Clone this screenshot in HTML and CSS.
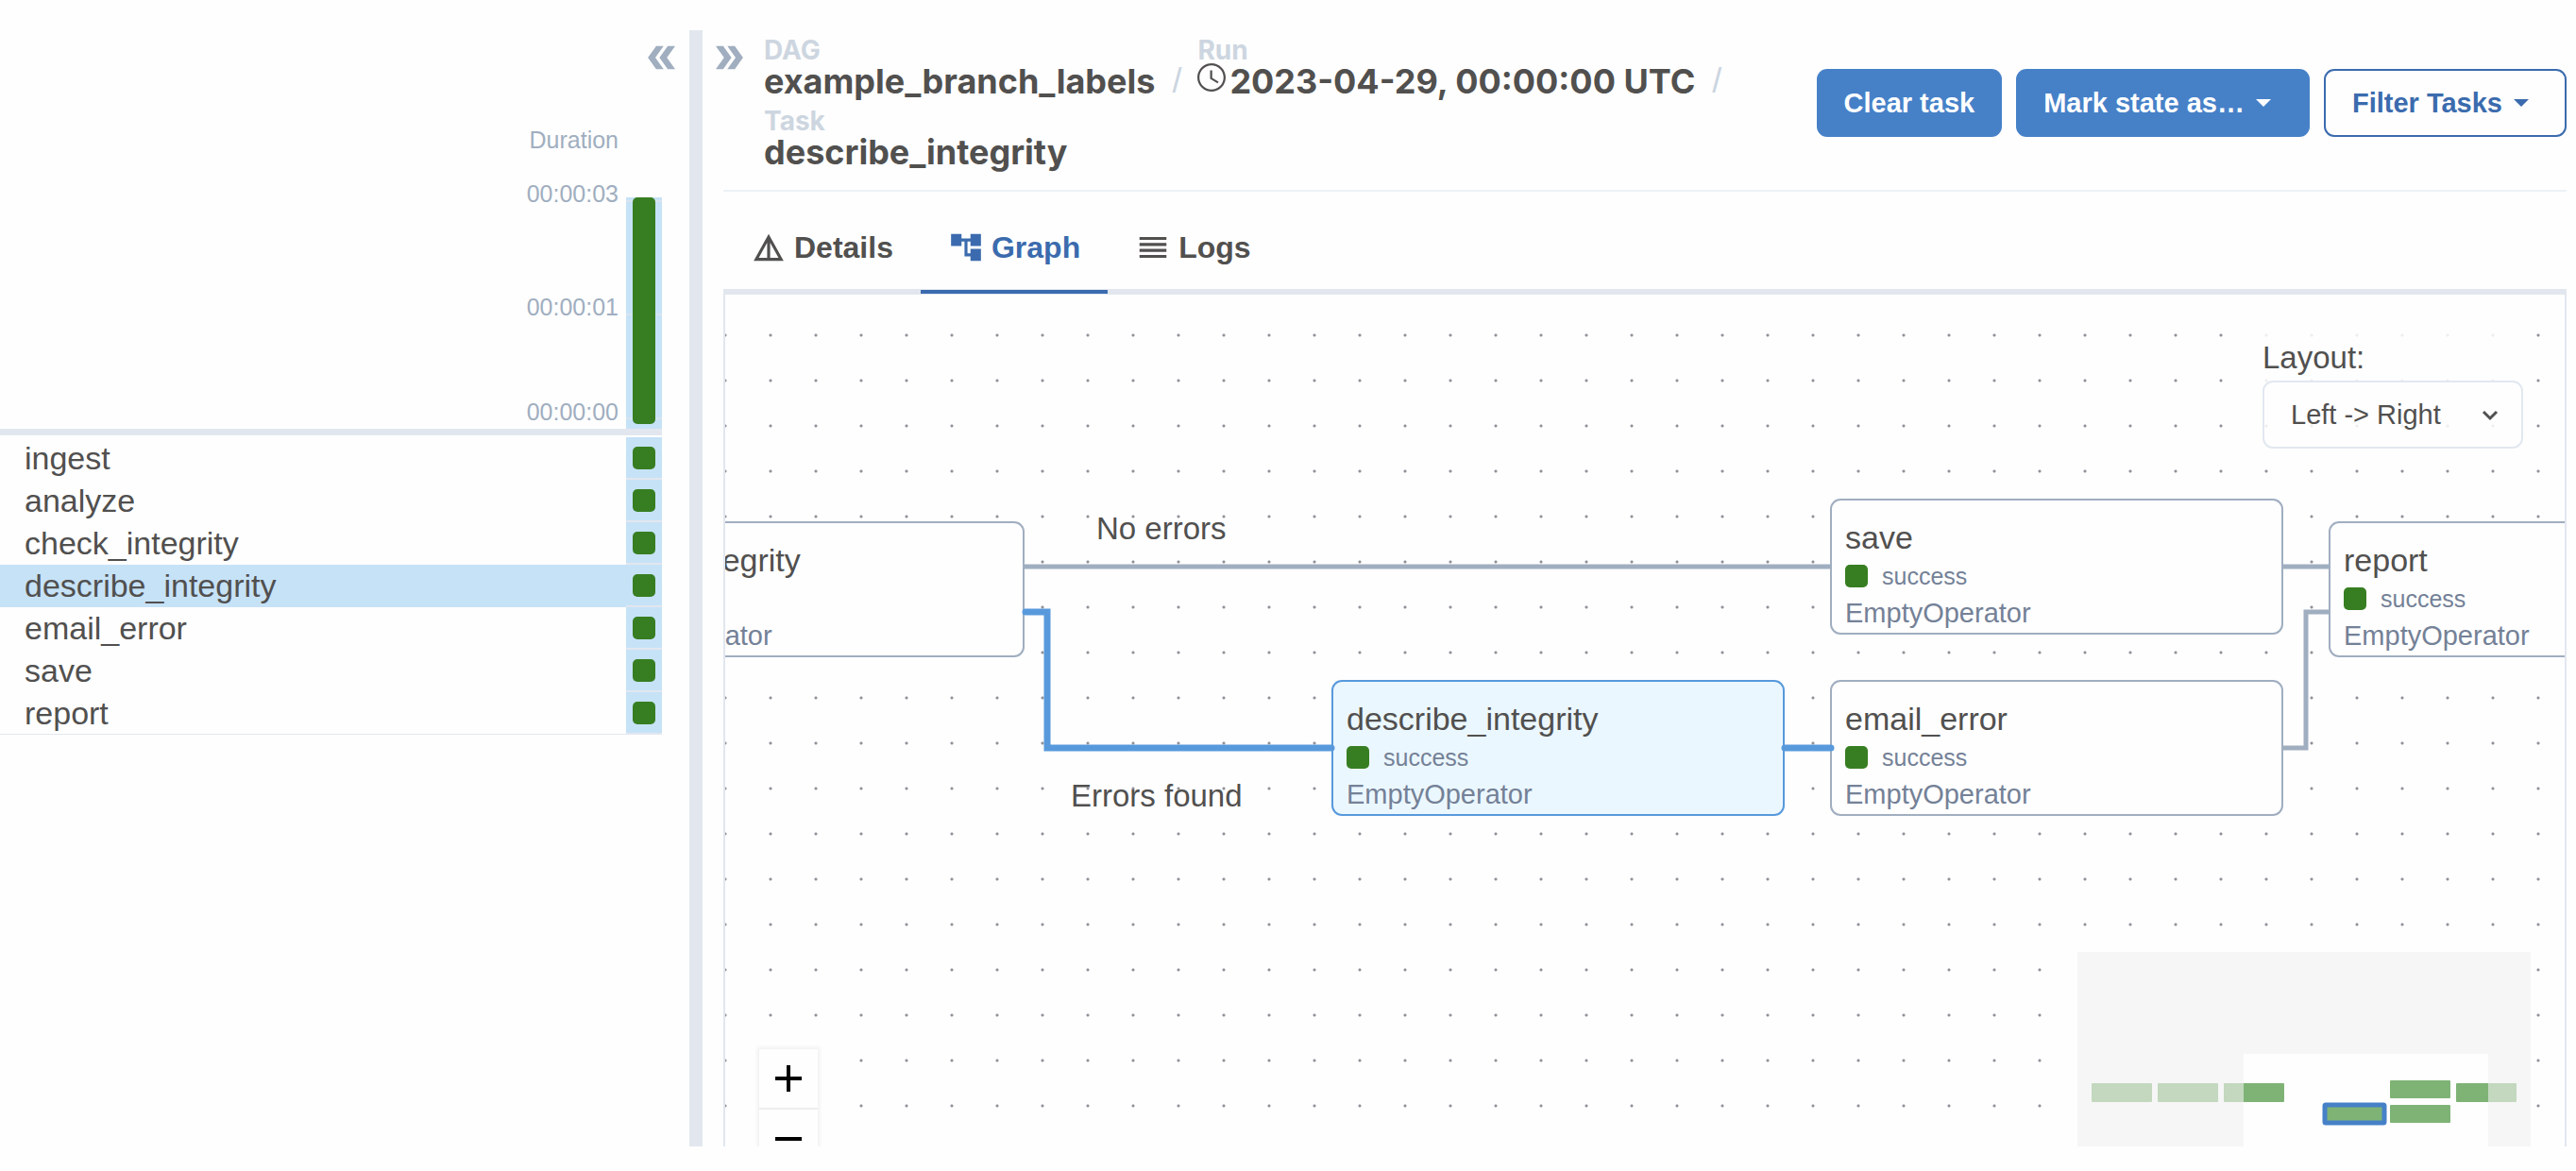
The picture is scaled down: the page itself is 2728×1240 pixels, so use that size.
FILE: index.html
```html
<!DOCTYPE html>
<html lang="en">
<head>
<meta charset="utf-8">
<title>example_branch_labels - Graph</title>
<link rel="stylesheet" href="styles.css">
</head>
<body>
<aside class="grid-panel">
  <button class="toggle toggle-left" aria-label="Collapse grid">
    <svg viewBox="0 0 24 24"><path d="M15.5 5H11l5 7-5 7h4.5l5-7z"/><path d="M8.5 5H4l5 7-5 7h4.5l5-7z"/></svg>
  </button>
  <table class="grid">
    <thead>
      <tr>
        <th class="axis" scope="col">
          <div class="axis-title">Duration</div>
          <div class="tick tick-max">00:00:03</div>
          <div class="tick tick-mid">00:00:01</div>
          <div class="tick">00:00:00</div>
        </th>
        <th class="run" scope="col"><div class="run-col"><div class="run-bar"></div></div></th>
      </tr>
    </thead>
    <tbody>
      <tr><th scope="row">ingest</th><td><span class="state"></span></td></tr>
      <tr><th scope="row">analyze</th><td><span class="state"></span></td></tr>
      <tr><th scope="row">check_integrity</th><td><span class="state"></span></td></tr>
      <tr class="selected"><th scope="row">describe_integrity</th><td><span class="state"></span></td></tr>
      <tr><th scope="row">email_error</th><td><span class="state"></span></td></tr>
      <tr><th scope="row">save</th><td><span class="state"></span></td></tr>
      <tr><th scope="row">report</th><td><span class="state"></span></td></tr>
    </tbody>
  </table>
</aside>
<div class="divider"></div>
<main class="details-panel">
  <header class="header">
    <button class="toggle" aria-label="Expand details">
      <svg viewBox="0 0 24 24"><path d="M15.5 5H11l5 7-5 7h4.5l5-7z"/><path d="M8.5 5H4l5 7-5 7h4.5l5-7z"/></svg>
    </button>
    <nav class="crumbs" aria-label="Breadcrumb">
      <div class="crumb">
        <a href="#dag"><span class="crumb-label">DAG</span><span class="crumb-value">example_branch_labels</span></a>
        <span class="slash">/</span>
      </div>
      <div class="crumb">
        <a href="#run"><span class="crumb-label">Run</span><span class="crumb-value"><svg class="clock" viewBox="2 2 20 20"><path d="M11.99 2C6.47 2 2 6.48 2 12s4.47 10 9.99 10C17.52 22 22 17.52 22 12S17.52 2 11.99 2zM12 20.500c-4.700 0-8.500-3.800-8.500-8.500s3.800-8.500 8.500-8.500 8.500 3.800 8.500 8.500-3.800 8.500-8.500 8.500zm.5-13.500H11v6l5.250 3.150.75-1.230-4.500-2.670z"/></svg>2023-04-29, 00:00:00 UTC</span></a>
        <span class="slash">/</span>
      </div>
      <div class="crumb">
        <a href="#task"><span class="crumb-label">Task</span><span class="crumb-value">describe_integrity</span></a>
      </div>
    </nav>
    <div class="actions">
      <button class="btn">Clear task</button>
      <button class="btn btn-menu">Mark state as…<svg class="caret" viewBox="0 0 16 8"><path d="M0 0h16l-8 8z"/></svg></button>
      <button class="btn btn-outline">Filter Tasks<svg class="caret" viewBox="0 0 16 8"><path d="M0 0h16l-8 8z"/></svg></button>
    </div>
  </header>
  <section class="content">
    <nav class="tabs">
      <button class="tab"><svg viewBox="0 0 24 24"><path d="M12 3L2 21h20L12 3zm1 5.920L18.600 19H13V8.920zm-2 0V19H5.400L11 8.920z"/></svg>Details</button>
      <button class="tab active"><svg viewBox="0 0 24 24"><path d="M22 11V3h-7v3H9V3H2v8h7V8h2v10h4v3h7v-8h-7v3h-2V8h2v3z"/></svg>Graph</button>
      <button class="tab"><svg viewBox="0 0 24 24"><path d="M3 15h18v-2H3v2zm0 4h18v-2H3v2zm0-8h18V9H3v2zm0-6v2h18V5H3z"/></svg>Logs</button>
    </nav>
    <div class="canvas">
      <div class="node" style="left:-163px;top:240px"><div class="name">check_integrity</div><div class="status"><span class="state"></span>success</div><div class="operator">EmptyOperator</div></div>
      <div class="node selected" style="left:642px;top:408px"><div class="name">describe_integrity</div><div class="status"><span class="state"></span>success</div><div class="operator">EmptyOperator</div></div>
      <div class="node" style="left:1170px;top:216px"><div class="name">save</div><div class="status"><span class="state"></span>success</div><div class="operator">EmptyOperator</div></div>
      <div class="node" style="left:1170px;top:408px"><div class="name">email_error</div><div class="status"><span class="state"></span>success</div><div class="operator">EmptyOperator</div></div>
      <div class="node" style="left:1698px;top:240px"><div class="name">report</div><div class="status"><span class="state"></span>success</div><div class="operator">EmptyOperator</div></div>
      <svg class="edges" width="1948" height="900">
        <path class="edge" d="M316 288H1171M1649 288H1699M1649 480H1674V336H1699"/>
        <path class="edge edge-selected" d="M318 336H341V480H642M1122 480H1171"/>
      </svg>
      <div class="edge-label" style="left:393px;top:229px">No errors</div>
      <div class="edge-label" style="left:366px;top:512px">Errors found</div>

      <div class="layout-panel">
        <label for="layout">Layout:</label>
        <div class="select">
          <select id="layout"><option>Left -&gt; Right</option></select>
          <svg viewBox="0 0 18 12"><path d="M2 2l7 7 7-7"/></svg>
        </div>
      </div>

      <div class="controls">
        <button aria-label="Zoom in"><svg viewBox="0 0 28 28"><path d="M0 14h28M14 0v28"/></svg></button>
        <button aria-label="Zoom out"><svg viewBox="0 0 28 28"><path d="M0 14h28"/></svg></button>
      </div>

      <svg class="minimap" viewBox="0 0 480 300">
        <g class="mini-nodes">
          <rect x="15" y="139" width="64" height="20" rx="1"/>
          <rect x="85" y="139" width="64" height="20" rx="1"/>
          <rect x="155" y="139" width="64" height="20" rx="1"/>
          <rect x="331" y="136" width="64" height="19" rx="1"/>
          <rect x="331" y="162" width="64" height="19" rx="1"/>
          <rect x="401" y="139" width="64" height="20" rx="1"/>
          <rect class="mini-selected" x="262" y="162" width="63" height="19" rx="1"/>
        </g>
        <path class="mini-mask" fill-rule="evenodd" d="M0 0h480v300H0zM176 108v192h259V108z"/>
      </svg>
    </div>
  </section>
</main>
</body>
</html>
```
FILE: styles.css
```css
* { box-sizing: border-box; }

body {
  margin: 0;
  height: 100vh;
  padding: 32px 10px 26px 0;
  display: flex;
  background: #fefefe;
  color: #51504f;
  font-family: "Liberation Sans", Arial, sans-serif;
  overflow: hidden;
}

button, select { font: inherit; color: inherit; margin: 0; border: 0; background: none; padding: 0; }
a { color: inherit; text-decoration: none; }

/* Grid panel */
.grid-panel { flex: 0 0 730px; display: flex; flex-direction: column; }
.divider { flex: 0 0 14px; background: #e2e7ef; }

.toggle { flex: none; width: 42px; height: 42px; margin-top: 8px; }
.toggle svg { display: block; width: 42px; height: 42px; fill: #a0aec0; }
.toggle-left { align-self: flex-end; margin-right: 8px; transform: rotate(180deg); }

.grid { margin: 52px 29px 0 0; border-collapse: separate; border-spacing: 0; }
.grid th, .grid td { padding: 0; }
.grid thead th { border-bottom: 7px solid #e2e7ef; vertical-align: bottom; }
.axis {
  color: #a0aec0;
  font-size: 25px;
  font-weight: 400;
  line-height: 28px;
  text-align: right;
}
.grid .axis { padding: 0 8px 4px 0; }
.axis-title { margin-bottom: 29px; }
.tick-max { margin-bottom: 92px; }
.tick-mid { margin-bottom: 83px; }
.run { width: 38px; }
.run-col {
  height: 245px;
  padding: 0 7px;
  background:
    linear-gradient(#d7e4f0, #d7e4f0) 0 3px / 100% 2px no-repeat,
    linear-gradient(#d7e4f0, #d7e4f0) 0 123px / 100% 2px no-repeat,
    linear-gradient(#d7e4f0, #d7e4f0) 0 233px / 100% 2px no-repeat,
    #c6e2f7;
}
.run-bar { height: 240px; border-radius: 5px; background: #377e22; }

.grid tbody th {
  height: 45px;
  padding-left: 26px;
  font-size: 34px;
  font-weight: 400;
  line-height: 43px;
  text-align: left;
}
.grid tbody td { width: 38px; padding: 0 7px; background: #c6e2f7; border-bottom: 2px solid #e2e7ef; vertical-align: middle; }
.grid tbody tr:first-child th, .grid tbody tr:first-child td { border-top: 2px solid #fefefe; }
.grid tbody tr:first-child th { height: 47px; }
.grid tbody tr:last-child th { border-bottom: 1px solid #e2e7ef; }
.grid .selected th { background: #c6e2f7; }
.state { display: block; flex: none; width: 24px; height: 24px; border-radius: 5px; background: #377e22; }

/* Details panel */
.details-panel { flex: 1; min-width: 0; display: flex; flex-direction: column; }
.header { display: flex; align-items: flex-start; padding-left: 7px; height: 169px; }
.crumbs { flex: 1; display: flex; flex-wrap: wrap; row-gap: 9px; padding: 7px 16px 0 16px; }
.crumb { display: flex; align-items: flex-end; }
.crumb-label, .crumb-value { font-family: Inter, "Liberation Sans", sans-serif; font-weight: 700; }
.crumb-label { display: block; color: #cdd6e0; font-size: 28px; line-height: 28px; }
.crumb-value { display: flex; font-size: 36px; line-height: 38px; white-space: nowrap; }
.clock { width: 30px; height: 30px; margin-right: 4px; fill: currentColor; }
.slash { margin: 0 17px 0 18px; color: #cbd5e0; font-size: 36px; line-height: 38px; }

.actions { flex: none; display: flex; gap: 15px; padding-top: 41px; }
.btn {
  display: flex;
  align-items: center;
  height: 72px;
  padding: 0 29px;
  border-radius: 11px;
  background: #4681c8;
  color: #fff;
  font-size: 29px;
  font-weight: 700;
  white-space: nowrap;
}
.btn-menu { padding-right: 41px; }
.btn-outline { padding: 0 38px 0 28px; border: 2px solid #3b6bae; background: #fefefe; color: #3b6bae; }
.caret { width: 16px; height: 8px; margin-left: 12px; fill: currentColor; }

.content { flex: 1; min-height: 0; margin-left: 22px; display: flex; flex-direction: column; border-top: 2px solid #edf2f7; }
.tabs { flex: none; display: flex; height: 109px; padding-top: 14px; border-bottom: 6px solid #e2e7ef; }
.tab {
  display: flex;
  align-items: center;
  gap: 8px;
  height: 94px;
  padding: 0 29px;
  border-bottom: 4px solid transparent;
  font-size: 32px;
  font-weight: 700;
}
.tab svg { width: 38px; height: 38px; fill: currentColor; }
.tab.active { color: #3b6bae; border-color: #3b6bae; }

/* Graph */
.canvas {
  position: relative;
  flex: 1;
  min-height: 0;
  overflow: hidden;
  border: solid #e2e7ef;
  border-width: 0 2px;
  background: radial-gradient(circle, #91919a 1px, transparent 2px) -24px 19px / 48px 48px;
}
.node {
  position: absolute;
  width: 480px;
  height: 144px;
  padding: 15px 14px 0;
  border: 2px solid #a0aec0;
  border-radius: 11px;
  background: #fefefe;
}
.node.selected { border-color: #5899dc; background: #ebf7fe; }
.name { font-size: 34px; line-height: 48px; }
.status { display: flex; align-items: center; gap: 15px; height: 34px; color: #748197; font-size: 25px; }
.operator { color: #748197; font-size: 29px; line-height: 44px; }
.edges { position: absolute; left: 0; top: 0; }
.edge { fill: none; stroke: #a0aec0; stroke-width: 5; }
.edge-selected { stroke: #5899dc; stroke-width: 7; stroke-linecap: round; }
.edge-label { position: absolute; font-size: 33px; line-height: 38px; }

.layout-panel { position: absolute; top: 36px; right: 44px; width: 276px; background: rgba(254, 254, 254, .85); }
.layout-panel label { display: block; font-size: 33px; line-height: 38px; padding: 12px 0 5px; }
.select { position: relative; }
.select select {
  appearance: none;
  display: block;
  width: 100%;
  height: 72px;
  padding: 0 28px;
  border: 2px solid #e2e8f0;
  border-radius: 11px;
  font-size: 29px;
}
.select svg { position: absolute; right: 26px; top: 31px; width: 18px; height: 12px; fill: none; stroke: #51504f; stroke-width: 3; pointer-events: none; }

.controls { position: absolute; left: 36px; bottom: -23px; box-shadow: 0 0 4px 2px rgba(0, 0, 0, .06); }
.controls button { display: flex; align-items: center; justify-content: center; width: 62px; height: 62px; background: #fefefe; }
.controls button:first-child { height: 64px; border-bottom: 2px solid #eee; }
.controls svg { width: 28px; height: 28px; stroke: #000; stroke-width: 4; }

.minimap { position: absolute; right: 36px; bottom: -94px; width: 480px; height: 300px; background: #fefefe; }
.mini-nodes { fill: #7fb376; }
.mini-selected { stroke: #4681c8; stroke-width: 5; }
.mini-mask { fill: rgba(240, 240, 240, .6); }
```
